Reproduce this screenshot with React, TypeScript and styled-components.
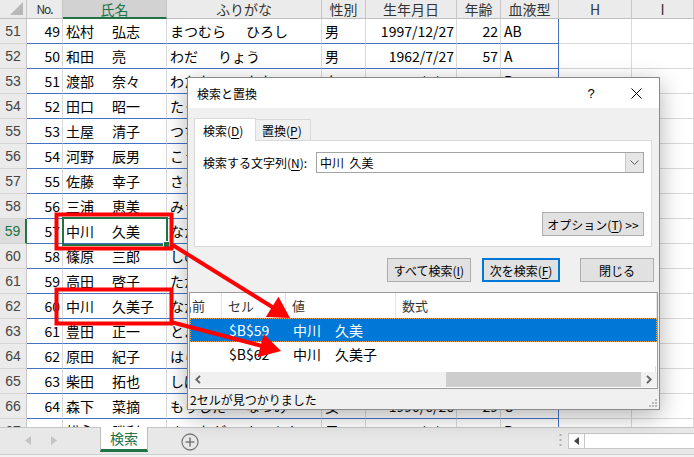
import React from 'react';
import styled, { createGlobalStyle } from 'styled-components';

const FONT = `"Noto Sans CJK JP", "Noto Sans", sans-serif`;
const GREEN = '#217346';
const TABLE_BLUE = '#4472c4';
const COLS = '27px 36px 104px 155px 44px 91px 44px 58px 73px 62px';

const GlobalStyle = createGlobalStyle`
  html, body {
    margin: 0;
    padding: 0;
    background: #fff;
  }
  body {
    font-family: ${FONT};
  }
`;

const Page = styled.div`
  position: relative;
  width: 694px;
  height: 457px;
  overflow: hidden;
  display: flex;
  flex-direction: column;
  background: #fff;
`;

const Sheet = styled.div`
  height: 427px;
  overflow: hidden;
  flex: none;
`;

const HeaderRow = styled.div`
  display: grid;
  grid-template-columns: ${COLS};
  height: 19px;
`;

const Corner = styled.div`
  position: relative;
  box-sizing: border-box;
  background: #ebebeb;
  border-right: 1px solid #c6c6c6;
  border-bottom: 1px solid #bfbfbf;

  &::after {
    content: '';
    position: absolute;
    right: 3px;
    bottom: 3px;
    width: 13px;
    height: 13px;
    background: #b8b8b8;
    clip-path: polygon(100% 0, 100% 100%, 0 100%);
  }
`;

const ColHead = styled.div<{ $active?: boolean; $small?: boolean }>`
  box-sizing: border-box;
  display: flex;
  align-items: center;
  justify-content: center;
  background: ${(p) => (p.$active ? '#d2d2d2' : '#ebebeb')};
  border-right: 1px solid #c6c6c6;
  border-bottom: ${(p) => (p.$active ? `2px solid ${GREEN}` : '1px solid #bfbfbf')};
  color: ${(p) => (p.$active ? GREEN : '#333')};
  font-size: ${(p) => (p.$small ? '12px' : '14px')};
  letter-spacing: ${(p) => (p.$small ? '-1px' : '0')};
  line-height: 1;
  white-space: nowrap;
`;

const Row = styled.div`
  display: grid;
  grid-template-columns: ${COLS};
  height: 25px;
`;

const RowHead = styled.div<{ $active?: boolean }>`
  box-sizing: border-box;
  display: flex;
  align-items: center;
  justify-content: center;
  background: ${(p) => (p.$active ? '#dcdcdc' : '#ebebeb')};
  border-right: ${(p) => (p.$active ? `2px solid ${GREEN}` : '1px solid #c6c6c6')};
  border-bottom: 1px solid #d6d6d6;
  color: ${(p) => (p.$active ? GREEN : '#444')};
  font-size: 14px;
  font-family: "Liberation Sans", ${FONT};
`;

type Align = 'left' | 'right';

const Cell = styled.div<{ $align?: Align; $table?: boolean; $edge?: boolean }>`
  box-sizing: border-box;
  display: flex;
  align-items: center;
  justify-content: ${(p) => (p.$align === 'right' ? 'flex-end' : 'flex-start')};
  padding: 0 2px 0 3px;
  border-right: 1px solid ${(p) => (p.$edge ? TABLE_BLUE : '#d9d9d9')};
  border-bottom: 1px solid ${(p) => (p.$table ? TABLE_BLUE : '#d9d9d9')};
  font-size: 14px;
  color: #000;
  white-space: nowrap;
  overflow: hidden;
`;

const Part = styled.span<{ $gap?: number; $w?: number }>`
  display: inline-block;
  margin-left: ${(p) => p.$gap ?? 0}px;
  ${(p) => (p.$w ? `width: ${p.$w}px;` : '')}
`;

const SelectedCell = styled.div`
  position: absolute;
  left: 62px;
  top: 217px;
  width: 106px;
  height: 29px;
  box-sizing: border-box;
  border: 2px solid ${GREEN};
  pointer-events: none;

  &::after {
    content: '';
    position: absolute;
    right: -4px;
    bottom: -4px;
    width: 5px;
    height: 5px;
    background: ${GREEN};
    border: 1px solid #fff;
  }
`;

/* ---------- sheet tab bar ---------- */

const TabBar = styled.div`
  height: 28px;
  box-sizing: border-box;
  display: flex;
  align-items: flex-start;
  background: #e8e8e8;
  border-top: 1px solid #c6c6c6;
  border-bottom: 1px solid #cfcfcf;
`;

const NavArea = styled.div`
  width: 100px;
  height: 24px;
  display: flex;
  align-items: center;
  gap: 20px;
  padding-left: 25px;
  box-sizing: border-box;
`;

const SheetTab = styled.div`
  width: 48px;
  height: 25px;
  margin-top: -1px;
  box-sizing: border-box;
  background: #fff;
  border-left: 1px solid #bcbcbc;
  border-right: 1px solid #bcbcbc;
  border-bottom: 3px solid ${GREEN};
  display: flex;
  align-items: center;
  justify-content: center;
  color: ${GREEN};
  font-size: 14px;
`;

const AddSheet = styled.div`
  margin-left: 33px;
  margin-top: 4px;
  width: 18px;
  height: 18px;
`;

const BarSpacer = styled.div`
  flex: 1;
`;

const Splitter = styled.div`
  margin-top: 5px;
  width: 16px;
  height: 16px;
  display: flex;
  justify-content: center;
`;

const HScrollBox = styled.div`
  margin-top: 5px;
  width: 126px;
  height: 16px;
  box-sizing: border-box;
  background: #fff;
  border: 1px solid #c6c6c6;
  border-right: none;
  display: flex;
`;

const HScrollBtn = styled.div`
  width: 15px;
  height: 100%;
  border-right: 1px solid #c6c6c6;
  display: flex;
  align-items: center;
  justify-content: center;
`;

const BottomStrip = styled.div`
  flex: 1;
  background: #f3f3f3;
`;

/* ---------- dialog ---------- */

const Dialog = styled.div`
  position: absolute;
  left: 187px;
  top: 77px;
  width: 473px;
  height: 333px;
  box-sizing: border-box;
  border: 1px solid #8a8a8a;
  background: #f0f0f0;
  box-shadow: 0 6px 22px rgba(0, 0, 0, 0.3);
  display: flex;
  flex-direction: column;
  font-size: 12px;
  color: #000;
`;

const TitleBar = styled.div`
  height: 30px;
  flex: none;
  background: #fff;
  display: flex;
  align-items: center;
  padding-left: 9px;
`;

const TitleText = styled.div`
  flex: 1;
  font-size: 12px;
`;

const TitleBtn = styled.div<{ $w: number }>`
  width: ${(p) => p.$w}px;
  height: 30px;
  display: flex;
  align-items: center;
  justify-content: center;
  font-family: "Liberation Sans", sans-serif;
  font-size: 13px;
`;

const Tabs = styled.div`
  display: flex;
  align-items: flex-end;
  padding: 10px 0 0 6px;
  height: 22px;
  flex: none;
`;

const Tab = styled.div<{ $active?: boolean }>`
  position: relative;
  z-index: ${(p) => (p.$active ? 1 : 0)};
  box-sizing: border-box;
  width: ${(p) => (p.$active ? 62 : 55)}px;
  height: ${(p) => (p.$active ? 23 : 21)}px;
  margin-bottom: ${(p) => (p.$active ? -1 : 0)}px;
  background: ${(p) => (p.$active ? '#fff' : '#f0f0f0')};
  border: 1px solid #d9d9d9;
  border-bottom: none;
  border-left: ${(p) => (p.$active ? '1px solid #d9d9d9' : 'none')};
  display: flex;
  align-items: center;
  padding-left: ${(p) => (p.$active ? 8 : 6)}px;
  font-size: 12px;
`;

const U = styled.span`
  text-decoration: underline;
  text-underline-offset: 2px;
`;

const Panel = styled.div`
  margin: 0 7px 0 6px;
  height: 107px;
  flex: none;
  box-sizing: border-box;
  background: #fff;
  border: 1px solid #d9d9d9;
  padding: 11px 7px 10px 8px;
  display: flex;
  flex-direction: column;
`;

const FindRow = styled.div`
  display: flex;
  align-items: center;
  height: 21px;
`;

const FindLabel = styled.div`
  width: 113px;
  flex: none;
  font-size: 12px;
`;

const Combo = styled.div`
  flex: 1;
  height: 21px;
  box-sizing: border-box;
  border: 1px solid #a5a5a5;
  display: flex;
`;

const ComboText = styled.div`
  flex: 1;
  display: flex;
  align-items: center;
  padding-left: 3px;
  font-size: 12px;
  white-space: pre;
`;

const ComboBtn = styled.div`
  width: 17px;
  background: #e6e6e6;
  border-left: 1px solid #c8c8c8;
  display: flex;
  align-items: center;
  justify-content: center;
`;

const OptionRow = styled.div`
  margin-top: auto;
  display: flex;
  justify-content: flex-end;
`;

const Button = styled.div<{ $w: number; $primary?: boolean }>`
  width: ${(p) => p.$w}px;
  height: 24px;
  box-sizing: border-box;
  background: #e1e1e1;
  border: ${(p) => (p.$primary ? '2px solid #0078d7' : '1px solid #adadad')};
  display: flex;
  align-items: center;
  justify-content: center;
  font-size: 12px;
  white-space: nowrap;
`;

const ButtonRow = styled.div`
  display: flex;
  justify-content: flex-end;
  gap: 11px;
  margin-top: 11px;
  padding-right: 5px;
  flex: none;

  & > :last-child {
    margin-left: 9px;
  }
`;

const ResultList = styled.div`
  margin: 10px 1px 0 1px;
  height: 97px;
  flex: none;
  box-sizing: border-box;
  background: #fff;
  border: 1px solid #9a9a9a;
  display: flex;
  flex-direction: column;
  overflow: hidden;
`;

const LIST_COLS = '32px 64px 110px 1fr';

const ListHeader = styled.div`
  display: grid;
  grid-template-columns: ${LIST_COLS};
  height: 25px;
  flex: none;
`;

/* the first column is scrolled out to the left, so its text is pushed to the end and clipped */
const ListHeadCell = styled.div<{ $scrolled?: boolean }>`
  display: flex;
  align-items: center;
  justify-content: ${(p) => (p.$scrolled ? 'flex-end' : 'flex-start')};
  padding: ${(p) => (p.$scrolled ? '0 16px 0 0' : '0 0 0 6px')};
  border-right: 1px solid #e5e5e5;
  font-size: 13px;
  color: #333;
  white-space: nowrap;
  overflow: hidden;
`;

const ListRow = styled.div<{ $selected?: boolean }>`
  display: grid;
  grid-template-columns: ${LIST_COLS};
  height: 24px;
  flex: none;
  box-sizing: border-box;
  background: ${(p) => (p.$selected ? '#0078d7' : '#fff')};
  color: ${(p) => (p.$selected ? '#fff' : '#000')};
  border: 1px dotted ${(p) => (p.$selected ? '#f0a040' : 'transparent')};
`;

const ListCell = styled.div`
  display: flex;
  align-items: center;
  padding-left: 6px;
  font-size: 14px;
  white-space: nowrap;
  overflow: hidden;
`;

const ListSpacer = styled.div`
  flex: 1;
  border-right: 1px solid #e2e2e2;
  margin-right: 1px;
`;

const ListScroll = styled.div`
  height: 15px;
  flex: none;
  margin-bottom: 1px;
  display: flex;
  background: #f0f0f0;
`;

const ScrollArrow = styled.div`
  width: 16px;
  display: flex;
  align-items: center;
  justify-content: center;
`;

const ScrollTrack = styled.div`
  flex: 1;
  display: flex;
  justify-content: flex-end;
`;

const ScrollThumb = styled.div`
  width: 195px;
  background: #cdcdcd;
`;

const StatusBar = styled.div`
  position: relative;
  flex: 1;
  display: flex;
  align-items: center;
  padding-left: 2px;
  font-size: 12px;
`;

const Grip = styled.svg`
  position: absolute;
  right: 1px;
  bottom: 1px;
`;

const Overlay = styled.svg`
  position: absolute;
  left: 0;
  top: 0;
  pointer-events: none;
`;

/* ---------- data ---------- */

type Person = {
  n: number;
  no: number;
  name: [string, string];
  kana: [string, string];
  sex: string;
  born: string;
  age: number;
  blood: string;
};

const people: Person[] = [
  { n: 51, no: 49, name: ['松村', '弘志'], kana: ['まつむら', 'ひろし'], sex: '男', born: '1997/12/27', age: 22, blood: 'AB' },
  { n: 52, no: 50, name: ['和田', '亮'], kana: ['わだ', 'りょう'], sex: '男', born: '1962/7/27', age: 57, blood: 'A' },
  { n: 53, no: 51, name: ['渡部', '奈々'], kana: ['わたなべ', 'なな'], sex: '女', born: '1996/7/24', age: 23, blood: 'B' },
  { n: 54, no: 52, name: ['田口', '昭一'], kana: ['たぐち', 'しょういち'], sex: '男', born: '1985/3/12', age: 34, blood: 'O' },
  { n: 55, no: 53, name: ['土屋', '清子'], kana: ['つちや', 'きよこ'], sex: '女', born: '1979/10/5', age: 40, blood: 'A' },
  { n: 56, no: 54, name: ['河野', '辰男'], kana: ['こうの', 'たつお'], sex: '男', born: '1964/1/18', age: 55, blood: 'B' },
  { n: 57, no: 55, name: ['佐藤', '幸子'], kana: ['さとう', 'さちこ'], sex: '女', born: '1990/8/30', age: 29, blood: 'O' },
  { n: 58, no: 56, name: ['三浦', '恵美'], kana: ['みうら', 'えみ'], sex: '女', born: '1988/4/2', age: 31, blood: 'A' },
  { n: 59, no: 57, name: ['中川', '久美'], kana: ['なかがわ', 'くみ'], sex: '女', born: '1992/6/11', age: 27, blood: 'AB' },
  { n: 60, no: 58, name: ['篠原', '三郎'], kana: ['しのはら', 'さぶろう'], sex: '男', born: '1958/9/21', age: 61, blood: 'O' },
  { n: 61, no: 59, name: ['高田', '啓子'], kana: ['たかだ', 'けいこ'], sex: '女', born: '1973/2/14', age: 46, blood: 'A' },
  { n: 62, no: 60, name: ['中川', '久美子'], kana: ['なかがわ', 'くみこ'], sex: '女', born: '1981/11/3', age: 38, blood: 'B' },
  { n: 63, no: 61, name: ['豊田', '正一'], kana: ['とよだ', 'しょういち'], sex: '男', born: '1969/5/8', age: 50, blood: 'A' },
  { n: 64, no: 62, name: ['原田', '紀子'], kana: ['はらだ', 'のりこ'], sex: '女', born: '1994/12/1', age: 25, blood: 'O' },
  { n: 65, no: 63, name: ['柴田', '拓也'], kana: ['しばた', 'たくや'], sex: '男', born: '1987/7/19', age: 32, blood: 'A' },
  { n: 66, no: 64, name: ['森下', '菜摘'], kana: ['もりした', 'なつみ'], sex: '女', born: '1990/6/26', age: 29, blood: 'O' },
  { n: 67, no: 65, name: ['松永', '勝利'], kana: ['まつなが', 'かつとし'], sex: '男', born: '1977/6/27', age: 42, blood: 'B' },
];

const headers: { label: string; active?: boolean; small?: boolean }[] = [
  { label: 'No.', small: true },
  { label: '氏名', active: true },
  { label: 'ふりがな' },
  { label: '性別' },
  { label: '生年月日' },
  { label: '年齢' },
  { label: '血液型' },
  { label: 'H' },
  { label: 'I' },
];

function arrowShape(x1: number, y1: number, x2: number, y2: number, len = 21, hw = 12) {
  const dx = x2 - x1;
  const dy = y2 - y1;
  const d = Math.hypot(dx, dy);
  const ux = dx / d;
  const uy = dy / d;
  const bx = x2 - ux * len;
  const by = y2 - uy * len;
  const px = -uy;
  const py = ux;
  return {
    x1,
    y1,
    end: { x: bx + ux * 2, y: by + uy * 2 },
    points: `${x2},${y2} ${bx + px * hw},${by + py * hw} ${bx - px * hw},${by - py * hw}`,
  };
}

const arrows = [arrowShape(171, 244, 290, 318), arrowShape(171, 322, 281, 351)];

const Annotations = () => (
  <Overlay width={694} height={457}>
    <rect x={56.5} y={214.5} width={115} height={34} fill="none" stroke="#ff0000" strokeWidth={4} />
    <rect x={56.5} y={289.5} width={115} height={34} fill="none" stroke="#ff0000" strokeWidth={4} />
    {arrows.map((a, i) => (
      <g key={i}>
        <line x1={a.x1} y1={a.y1} x2={a.end.x} y2={a.end.y} stroke="#ff0000" strokeWidth={4} />
        <polygon points={a.points} fill="#ff0000" />
      </g>
    ))}
  </Overlay>
);

const FindDialog = () => (
  <Dialog>
    <TitleBar>
      <TitleText>検索と置換</TitleText>
      <TitleBtn $w={44}>?</TitleBtn>
      <TitleBtn $w={46}>
        <svg width="11" height="11" viewBox="0 0 11 11">
          <path d="M0.5 0.5 L10.5 10.5 M10.5 0.5 L0.5 10.5" stroke="#000" strokeWidth="1" />
        </svg>
      </TitleBtn>
    </TitleBar>
    <Tabs>
      <Tab $active>
        検索(<U>D</U>)
      </Tab>
      <Tab>
        置換(<U>P</U>)
      </Tab>
    </Tabs>
    <Panel>
      <FindRow>
        <FindLabel>
          検索する文字列(<U>N</U>):
        </FindLabel>
        <Combo>
          <ComboText>{'中川  久美'}</ComboText>
          <ComboBtn>
            <svg width="9" height="6" viewBox="0 0 9 6">
              <path d="M0.5 0.5 L4.5 4.5 L8.5 0.5" fill="none" stroke="#606060" strokeWidth="1" />
            </svg>
          </ComboBtn>
        </Combo>
      </FindRow>
      <OptionRow>
        <Button $w={102}>
          オプション(<U>T</U>)&nbsp;&gt;&gt;
        </Button>
      </OptionRow>
    </Panel>
    <ButtonRow>
      <Button $w={84}>
        すべて検索(<U>I</U>)
      </Button>
      <Button $w={78} $primary>
        次を検索(<U>F</U>)
      </Button>
      <Button $w={74}>閉じる</Button>
    </ButtonRow>
    <ResultList>
      <ListHeader>
        <ListHeadCell $scrolled>名前</ListHeadCell>
        <ListHeadCell>セル</ListHeadCell>
        <ListHeadCell>値</ListHeadCell>
        <ListHeadCell>数式</ListHeadCell>
      </ListHeader>
      <ListRow $selected>
        <ListCell />
        <ListCell>$B$59</ListCell>
        <ListCell>中川　久美</ListCell>
        <ListCell />
      </ListRow>
      <ListRow>
        <ListCell />
        <ListCell>$B$62</ListCell>
        <ListCell>中川　久美子</ListCell>
        <ListCell />
      </ListRow>
      <ListSpacer />
      <ListScroll>
        <ScrollArrow>
          <svg width="6" height="9" viewBox="0 0 6 9">
            <path d="M5 0.8 L1.3 4.5 L5 8.2" fill="none" stroke="#606060" strokeWidth="1.8" />
          </svg>
        </ScrollArrow>
        <ScrollTrack>
          <ScrollThumb />
        </ScrollTrack>
        <ScrollArrow>
          <svg width="6" height="9" viewBox="0 0 6 9">
            <path d="M1 0.8 L4.7 4.5 L1 8.2" fill="none" stroke="#606060" strokeWidth="1.8" />
          </svg>
        </ScrollArrow>
      </ListScroll>
    </ResultList>
    <StatusBar>
      2セルが見つかりました
      <Grip width="10" height="10" viewBox="0 0 10 10">
        {[
          [8, 2],
          [5, 5],
          [8, 5],
          [2, 8],
          [5, 8],
          [8, 8],
        ].map(([x, y]) => (
          <rect key={`${x}-${y}`} x={x - 1} y={y - 1} width={2} height={2} fill="#b8b8b8" />
        ))}
      </Grip>
    </StatusBar>
  </Dialog>
);

export default function App() {
  return (
    <Page>
      <GlobalStyle />
      <Sheet>
        <HeaderRow>
          <Corner />
          {headers.map((h) => (
            <ColHead key={h.label} $active={h.active} $small={h.small}>
              {h.label}
            </ColHead>
          ))}
        </HeaderRow>
        {people.map((p) => (
          <Row key={p.n}>
            <RowHead $active={p.n === 59}>{p.n}</RowHead>
            <Cell $table $align="right">
              {p.no}
            </Cell>
            <Cell $table>
              <Part $w={46}>{p.name[0]}</Part>
              <Part>{p.name[1]}</Part>
            </Cell>
            <Cell $table>
              <Part>{p.kana[0]}</Part>
              <Part $gap={20}>{p.kana[1]}</Part>
            </Cell>
            <Cell $table>{p.sex}</Cell>
            <Cell $table $align="right">
              {p.born}
            </Cell>
            <Cell $table $align="right">
              {p.age}
            </Cell>
            <Cell $table $edge>
              {p.blood}
            </Cell>
            <Cell />
            <Cell />
          </Row>
        ))}
      </Sheet>
      <TabBar>
        <NavArea>
          <svg width="6" height="9" viewBox="0 0 6 9">
            <path d="M6 0 L0 4.5 L6 9 Z" fill="#c4c4c4" />
          </svg>
          <svg width="6" height="9" viewBox="0 0 6 9">
            <path d="M0 0 L6 4.5 L0 9 Z" fill="#c4c4c4" />
          </svg>
        </NavArea>
        <SheetTab>検索</SheetTab>
        <AddSheet>
          <svg width="18" height="18" viewBox="0 0 18 18">
            <circle cx="9" cy="9" r="8" fill="none" stroke="#7a7a7a" strokeWidth="1.3" />
            <path d="M9 4.5 V13.5 M4.5 9 H13.5" stroke="#7a7a7a" strokeWidth="1.6" />
          </svg>
        </AddSheet>
        <BarSpacer />
        <Splitter>
          <svg width="3" height="14" viewBox="0 0 3 14">
            <rect x="0.5" y="1" width="2" height="2" fill="#b0b0b0" />
            <rect x="0.5" y="6" width="2" height="2" fill="#b0b0b0" />
            <rect x="0.5" y="11" width="2" height="2" fill="#b0b0b0" />
          </svg>
        </Splitter>
        <HScrollBox>
          <HScrollBtn>
            <svg width="5" height="8" viewBox="0 0 5 8">
              <path d="M5 0 L0 4 L5 8 Z" fill="#444" />
            </svg>
          </HScrollBtn>
        </HScrollBox>
      </TabBar>
      <BottomStrip />
      <SelectedCell />
      <FindDialog />
      <Annotations />
    </Page>
  );
}
